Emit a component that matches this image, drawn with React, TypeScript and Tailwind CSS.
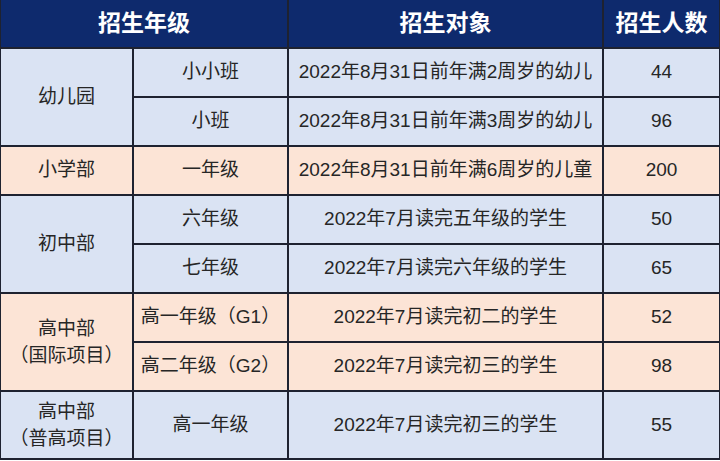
import React from "react";

type Tone = "blue" | "peach";

const toneBg: Record<Tone, string> = {
  blue: "bg-[#dae3f3]",
  peach: "bg-[#fce4d6]",
};

const Cell = ({
  tone,
  className = "",
  children,
}: {
  tone: Tone;
  className?: string;
  children: React.ReactNode;
}) => (
  <div
    className={`${toneBg[tone]} flex items-center justify-center text-center text-[19px] text-[#262626] ${className}`}
  >
    {children}
  </div>
);

const rows: { grade: string; target: string; count: string; tone: Tone }[] = [
  { grade: "小小班", target: "2022年8月31日前年满2周岁的幼儿", count: "44", tone: "blue" },
  { grade: "小班", target: "2022年8月31日前年满3周岁的幼儿", count: "96", tone: "blue" },
  { grade: "一年级", target: "2022年8月31日前年满6周岁的儿童", count: "200", tone: "peach" },
  { grade: "六年级", target: "2022年7月读完五年级的学生", count: "50", tone: "blue" },
  { grade: "七年级", target: "2022年7月读完六年级的学生", count: "65", tone: "blue" },
  { grade: "高一年级（G1）", target: "2022年7月读完初二的学生", count: "52", tone: "peach" },
  { grade: "高二年级（G2）", target: "2022年7月读完初三的学生", count: "98", tone: "peach" },
  { grade: "高一年级", target: "2022年7月读完初三的学生", count: "55", tone: "blue" },
];

const App = () => {
  return (
    <div
      className="w-[720px] h-[461px] bg-white"
      style={{ fontFamily: '"Liberation Sans", "Noto Sans CJK SC", sans-serif' }}
    >
      <div className="grid grid-cols-[131px_153px_313px_115px] grid-rows-[47px_repeat(7,47px)_66px] gap-[2px] bg-[#1e2230] pl-px pr-[2px] pb-[2px] w-[720px]">
        {/* Header */}
        <div className="col-span-2 bg-[#0e2a6d] flex items-center justify-center text-white font-bold text-[23px]">
          招生年级
        </div>
        <div className="bg-[#0e2a6d] flex items-center justify-center text-white font-bold text-[23px]">
          招生对象
        </div>
        <div className="bg-[#0e2a6d] flex items-center justify-center text-white font-bold text-[23px]">
          招生人数
        </div>

        {/* Section labels spanning rows */}
        <Cell tone="blue" className="col-start-1 row-start-2 row-span-2">
          幼儿园
        </Cell>
        <Cell tone="peach" className="col-start-1 row-start-4">
          小学部
        </Cell>
        <Cell tone="blue" className="col-start-1 row-start-5 row-span-2">
          初中部
        </Cell>
        <Cell tone="peach" className="col-start-1 row-start-7 row-span-2 flex-col leading-[27px]">
          <span>高中部</span>
          <span>（国际项目）</span>
        </Cell>
        <Cell tone="blue" className="col-start-1 row-start-9 flex-col leading-[27px]">
          <span>高中部</span>
          <span>（普高项目）</span>
        </Cell>

        {rows.map((r, i) => (
          <React.Fragment key={i}>
            <Cell tone={r.tone} className="col-start-2">
              {r.grade}
            </Cell>
            <Cell tone={r.tone} className="col-start-3">
              {r.target}
            </Cell>
            <Cell tone={r.tone} className="col-start-4">
              {r.count}
            </Cell>
          </React.Fragment>
        ))}
      </div>
    </div>
  );
};

export default App;
